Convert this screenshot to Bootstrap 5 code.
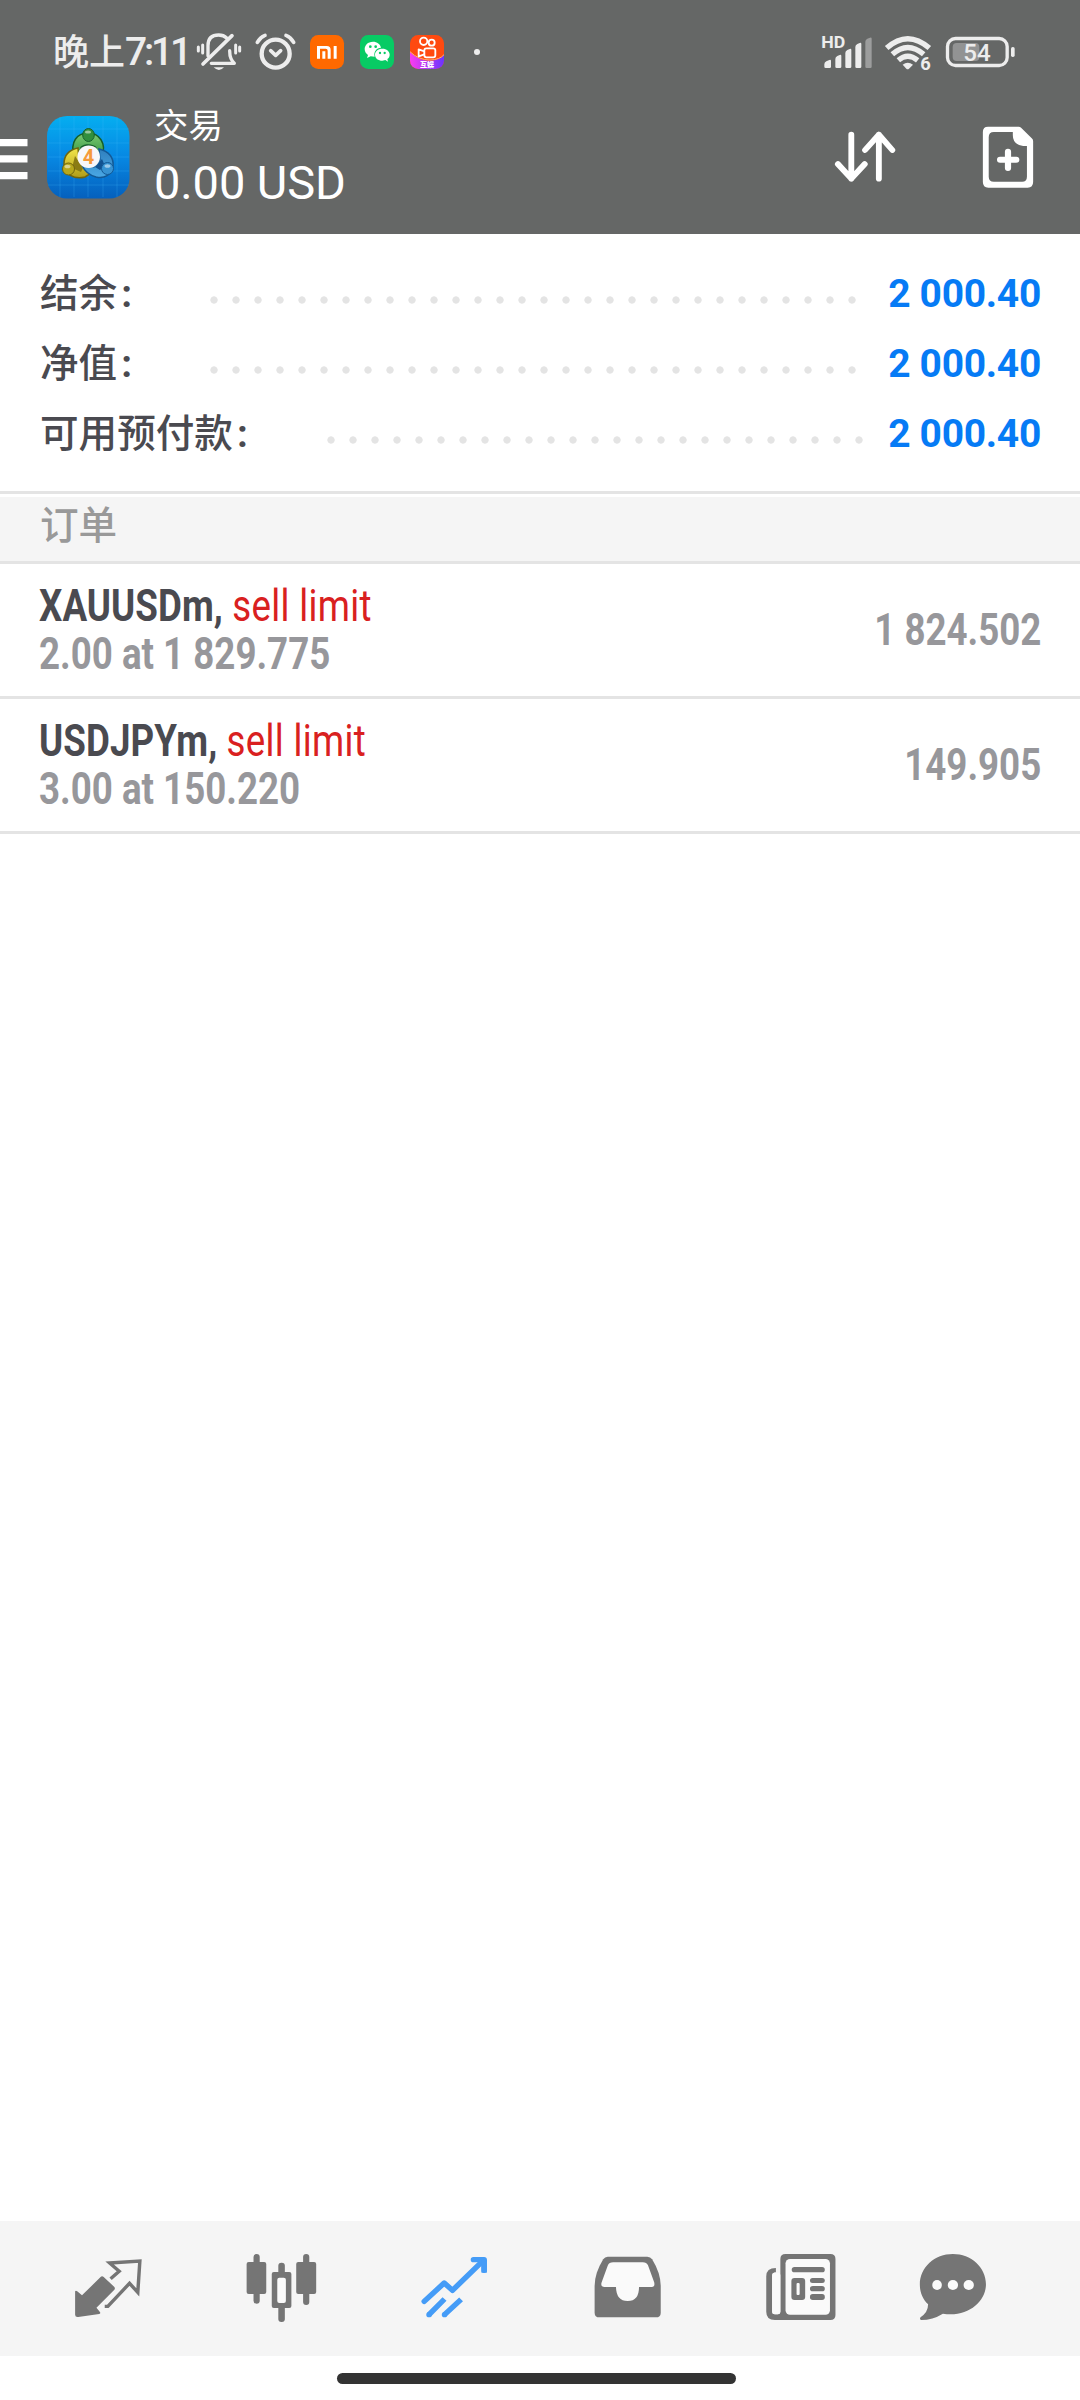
<!DOCTYPE html>
<html lang="zh-CN">
<head>
<meta charset="utf-8">
<meta name="viewport" content="width=device-width, initial-scale=1">
<title>交易</title>
<link href="https://cdn.jsdelivr.net/npm/bootstrap@5.3.0/dist/css/bootstrap.min.css" rel="stylesheet">
<style>
  body { font-family: Roboto, "Noto Sans CJK SC", sans-serif; background: #fff; width: 1080px; height: 2400px; overflow: hidden; }
  svg { display: block; flex: none; }
  .app-head { background: #656766; height: 234px; color: #fff; }
  .status { height: 100px; padding: 1px 52px 0 53px; color: #ededed; }
  .status svg { margin-top: 3px; }
  .clock { font-size: 36px; line-height: 100px; font-weight: 500; width: 143px; white-space: nowrap; font-family: "Noto Sans CJK SC", sans-serif; }
  .clock span { font-family: Roboto, sans-serif; font-size: 39px; letter-spacing: -3.2px; }
  .toolbar { height: 134px; }
  .t-block { padding-left: 24px; }
  .t-small { font-size: 34.5px; line-height: 40px; padding-top: 3px; font-family: "Noto Sans CJK SC", sans-serif; }
  .t-big { font-size: 47px; line-height: 54px; padding-top: 13px; letter-spacing: -.1px; }
  .summary { height: 260px; padding: 23px 39px 0 40px; border-bottom: 3px solid #e4e4e4; }
  .s-row { height: 70px; }
  .s-label { font-size: 38.6px; font-weight: 500; color: #4a4a50; width: 162.5px; font-family: "Noto Sans CJK SC", sans-serif; line-height: 70px; white-space: nowrap; }
  .s-label span { font-family: Roboto, sans-serif; font-weight: 700; margin-left: 4px; }
  .s-label.wide { width: 279.5px; }
  .dots { height: 22px; width: 660px; margin-top: 15px; background: radial-gradient(circle at center, #e4e4e4 3.3px, transparent 4px) 0 0 / 22px 22px; }
  .dots.short { width: 550px; }
  .s-val { font-size: 39px; font-weight: 700; color: #067bf5; letter-spacing: -.3px; line-height: 70px; padding-top: 3px; }
  .sect { margin-top: 3px; height: 67px; background: #f5f5f5; border-bottom: 3px solid #e4e4e4; padding-left: 40px; font-size: 38.6px; line-height: 50px; font-weight: 500; color: #999; font-family: "Noto Sans CJK SC", sans-serif; }
  .order { height: 135px; border-bottom: 3px solid #e4e4e4; padding: 0 39px; font-size: 44px; font-weight: 700; line-height: 48px; }
  .cond { transform: scaleX(.834); transform-origin: 0 50%; white-space: nowrap; }
  .cond.end { transform-origin: 100% 50%; }
  .o-left { padding-top: 18px; }
  .sym { color: #4a4a50; letter-spacing: .1px; }
  .sell { color: #d92020; font-weight: 400; letter-spacing: .4px; }
  .muted { color: #97979b; }
  .tabs { height: 135px; background: #f5f5f5; padding-left: 22px; }
  .tab-i { width: 173px; }
  .tab-i:last-child { width: 132px; }
  .home { height: 44px; padding-right: 7px; }
  .pill { width: 399px; height: 11px; margin-top: 17px; border-radius: 6px; background: #333; }
</style>
</head>
<body class="d-flex flex-column">
<header class="app-head">
  <div class="status d-flex align-items-center">
    <div class="clock">晚上<span>7:11</span></div>
    <svg width="290" height="64" viewBox="0 0 870 192" fill="none" stroke="#ededed">
      <g stroke-width="10" stroke-linecap="round" transform="translate(-48 -1)">
        <path d="M55 82V94M68 76V100M167 76V100M179 82V94" stroke-width="9"/>
        <path d="M84 108V78C84 55 98 46 116 46C126 46 135 50 140 55"/>
        <path d="M156 48L69 133" stroke-width="11"/>
        <path d="M94 131H163C155 122 149 115 149 93" stroke-linejoin="round"/>
        <path d="M101 143H132Q117 159 101 143Z" fill="#ededed" stroke="none"/>
        <circle cx="287" cy="102" r="42" stroke-width="13"/>
        <path d="M272 93L287 107L302 93" stroke-width="11" stroke-linejoin="round"/>
        <path d="M232 68Q240 53 255 47M341 68Q333 53 318 47" stroke-width="11"/>
      </g>
      <g stroke="none" transform="translate(-48 0)">
        <rect x="390" y="45" width="102" height="102" rx="25" fill="#ff6900"/>
        <path d="M411 78H440Q452 78 452 90V116H443V92Q443 86 437 86H420V116H411ZM427 94H436V116H427ZM461 78H470V116H461Z" fill="#fff"/>
        <rect x="540" y="45" width="102" height="102" rx="25" fill="#07cb64"/>
        <path d="M579 65C563 65 554 76 554 87C554 95 558 101 564 105L561 114L572 109L584 110C580 94 590 84 603 83C601 72 591 65 579 65Z" fill="#fff"/>
        <path d="M607 86C594 86 585 94 585 104C585 115 595 122 607 122L616 120L624 125L622 117C627 114 629 109 629 104C629 94 620 86 607 86Z" fill="#fff"/>
        <g fill="#07cb64"><circle cx="571" cy="80" r="4"/><circle cx="587" cy="80" r="4"/><circle cx="600" cy="99" r="3.5"/><circle cx="614" cy="99" r="3.5"/></g>
        <defs>
          <clipPath id="ks"><rect x="690" y="45" width="102" height="102" rx="25"/></clipPath>
          <linearGradient id="kg"><stop offset="0" stop-color="#f93cf0"/><stop offset="1" stop-color="#6a35ff"/></linearGradient>
        </defs>
        <g clip-path="url(#ks)">
          <rect x="690" y="45" width="102" height="102" fill="#ff4a10"/>
          <path d="M690 95Q715 122 750 122Q780 121 792 104V147H690Z" fill="url(#kg)"/>
          <path d="M690 95Q715 120 750 120Q780 119 792 104" fill="none" stroke="#ffb070" stroke-width="3"/>
        </g>
        <g fill="none" stroke="#fff" stroke-width="5.5"><circle cx="731" cy="64" r="11"/><circle cx="755" cy="68" r="9"/><rect x="733" y="85" width="33" height="27" rx="6"/><path d="M733 94L716 88V109L733 103" stroke-linejoin="round"/></g>
        <text x="741" y="142" font-size="21" font-weight="900" fill="#fff" text-anchor="middle" font-family="Noto Sans CJK SC, sans-serif">互娱</text>
        <circle cx="891" cy="96" r="9" fill="#ededed"/>
      </g>
    </svg>
    <svg class="ms-auto" width="208" height="64" viewBox="0 0 624 192">
      <g fill="#ededed" transform="translate(-30 0)">
        <text x="34" y="83" font-size="48" font-weight="700" font-family="Roboto, sans-serif" textLength="72" lengthAdjust="spacingAndGlyphs">HD</text>
        <path d="M43 144V133Q43 127 49 124L58 120Q63 118 63 123V140Q63 144 59 144H47Q43 144 43 140ZM76 144V117Q76 111 82 108L89 105Q94 103 94 108V140Q94 144 90 144H80Q76 144 76 140ZM106 144V99Q106 93 112 90L119 87Q124 85 124 90V140Q124 144 120 144H110Q106 144 106 140ZM136 144V81Q136 75 142 72L149 69Q154 67 154 72V140Q154 144 150 144H140Q136 144 136 140Z"/>
        <path d="M166 144V65Q166 59 172 56L180 53Q185 51 185 56V140Q185 144 181 144H170Q166 144 166 140Z" fill="#9c9d9d"/>
        <g fill="none" stroke="#ededed" stroke-width="16">
          <path d="M230 84Q293 28 358 84"/><path d="M247 103Q293 62 341 103"/><path d="M265 121Q293 97 323 121"/>
        </g>
        <path d="M278 134Q293 122 309 134L297 146Q293 149 289 146Z"/>
        <text x="331" y="151" font-size="55" font-weight="700" font-family="Roboto, sans-serif" stroke="#656766" stroke-width="8" paint-order="stroke">6</text>
        <rect x="412.5" y="55.5" width="179" height="81" rx="24" fill="none" stroke="#ededed" stroke-width="10"/>
        <rect x="428" y="69" width="80" height="54" rx="12" fill="#929393"/>
        <rect x="603" y="81" width="11" height="30" rx="5"/>
        <text x="501" y="123" font-size="74" font-weight="500" text-anchor="middle" font-family="Roboto, sans-serif" textLength="82" lengthAdjust="spacingAndGlyphs">54</text>
      </g>
    </svg>
  </div>
  <div class="toolbar d-flex">
    <svg width="47" height="134" viewBox="0 0 47 134" fill="#fff"><path d="M0 39h27.5v7.3H0zM0 55.3h27.5v7.3H0zM0 72h27.5v7.3H0z"/></svg>
    <svg width="83" height="134" viewBox="0 0 83 134">
      <defs>
        <linearGradient id="bg" x1=".5" y1="0" x2=".5" y2="1"><stop offset="0" stop-color="#05aef0"/><stop offset=".5" stop-color="#0788e3"/><stop offset="1" stop-color="#0560bd"/></linearGradient>
        <linearGradient id="gr" x2="0" y2="1"><stop offset="0" stop-color="#7ccb72"/><stop offset="1" stop-color="#1c8434"/></linearGradient>
        <linearGradient id="ye" x2="0" y2="1"><stop offset="0" stop-color="#f2e64a"/><stop offset="1" stop-color="#b09c18"/></linearGradient>
        <linearGradient id="bl" x2="0" y2="1"><stop offset="0" stop-color="#2f7fbe"/><stop offset="1" stop-color="#4aa8e4"/></linearGradient>
      </defs>
      <rect x="0" y="16" width="82.5" height="82.5" rx="20" fill="url(#bg)"/>
      <path d="M13 17V97M27 17V97M41 17V97M56 17V97M70 17V97M1 29H82M1 43H82M1 57H82M1 71H82M1 85H82" stroke="#4bc3ff" stroke-opacity=".22"/>
      <path d="M27 56C23 42 30 33 41 33S60 43 55 57L50 61L41 64L31 61Z" fill="url(#gr)" stroke="#155f2a" stroke-width="1.5"/>
      <path d="M33 48C35 43 47 43 50 48L46 51H37Z" fill="#155f2a"/>
      <path d="M31 48C21 50 17 56 17 64C17 74 27 80 38 77L46 72L32 60Z" fill="url(#ye)" stroke="#71650c" stroke-width="1.5"/>
      <path d="M25 68L28 56L36 68L34 72Z" fill="#8b7c13"/>
      <path d="M52 49C62 51 67 58 66 66C65 75 57 79 49 77C42 75 37 70 35 65L47 67L53 60Z" fill="url(#bl)" stroke="#135995" stroke-width="1.5"/>
      <path d="M48 67L55 59L58 66L53 70Z" fill="#125291"/>
      <g stroke-width="1"><ellipse cx="41.5" cy="35" rx="5.8" ry="6.5" fill="#318f3d" stroke="#155f2a"/><circle cx="21.5" cy="69" r="6" fill="#b7a81c" stroke="#71650c"/><circle cx="60.5" cy="68.5" r="6" fill="#3793d3" stroke="#135995"/></g>
      <g fill="#fff" opacity=".5"><ellipse cx="41" cy="32" rx="3" ry="1.6"/><ellipse cx="20.5" cy="66.5" rx="3" ry="1.8"/><ellipse cx="60.5" cy="66" rx="3" ry="1.8"/></g>
      <circle cx="41.7" cy="56.8" r="11.3" fill="#f7f7fa"/>
      <text x="41.5" y="64" font-size="20" font-weight="700" text-anchor="middle" fill="#f59a3a" font-family="Roboto, sans-serif">4</text>
    </svg>
    <div class="t-block">
      <div class="t-small">交易</div>
      <div class="t-big">0.00 USD</div>
    </div>
    <svg class="ms-auto" width="260" height="134" viewBox="0 0 260 134">
      <g transform="translate(-280 -100) scale(.34437 .33333)" fill="none" stroke="#fff" stroke-linecap="round" stroke-linejoin="round">
        <path d="M904 404V536M865 492L904 536L943 492M984 536V404M944 450L984 404L1023 450" stroke-width="17"/>
        <path d="M1301 380H1390Q1394 380 1397 383L1428 415Q1432 418 1432 424V546Q1432 563 1416 563H1302Q1286 563 1286 546V396Q1286 380 1301 380ZM1318 396Q1303 396 1303 412V530Q1303 545 1318 545H1400Q1414 545 1414 530V438H1403Q1373 434 1373 406V396Z" fill="#fff" fill-rule="evenodd" stroke="none"/>
        <path d="M1359 455V504M1336 479H1383" stroke-width="18"/>
      </g>
    </svg>
  </div>
</header>

<section class="summary">
  <div class="s-row d-flex align-items-center"><div class="s-label">结余<span>:</span></div><div class="dots"></div><div class="s-val ms-auto">2 000.40</div></div>
  <div class="s-row d-flex align-items-center"><div class="s-label">净值<span>:</span></div><div class="dots"></div><div class="s-val ms-auto">2 000.40</div></div>
  <div class="s-row d-flex align-items-center"><div class="s-label wide">可用预付款<span>:</span></div><div class="dots short"></div><div class="s-val ms-auto">2 000.40</div></div>
</section>
<div class="sect">订单</div>
<main class="flex-grow-1">
  <div class="order d-flex justify-content-between align-items-center">
    <div class="cond o-left align-self-start"><div class="sym">XAUUSDm, <span class="sell">sell limit</span></div><div class="muted">2.00 at 1 829.775</div></div>
    <div class="cond end muted">1 824.502</div>
  </div>
  <div class="order d-flex justify-content-between align-items-center">
    <div class="cond o-left align-self-start"><div class="sym">USDJPYm, <span class="sell">sell limit</span></div><div class="muted">3.00 at 150.220</div></div>
    <div class="cond end muted">149.905</div>
  </div>
</main>

<nav class="tabs d-flex">
  <div class="tab-i d-flex justify-content-center"><svg width="100" height="135" viewBox="0 0 100 135"><g transform="translate(-59.3 -21) scale(.34437 .33333)" fill="#757575">
    <path d="M219 274Q221 270 225 274L239 286L293 231Q297 226 302 231L333 261Q336 265 333 269L281 323L291 336Q294 341 289 342L228 351Q219 352 219 344Z"/>
    <path d="M322 236L347 214L319 189L407 183L401 277L377 250L314 319H305" fill="none" stroke="#757575" stroke-width="10"/></g></svg></div>
  <div class="tab-i d-flex justify-content-center"><svg width="100" height="135" viewBox="0 0 100 135"><g transform="translate(-231.6 -21) scale(.34437 .33333)" fill="#757575">
    <rect x="735" y="162" width="18" height="149" rx="9"/><rect x="715" y="186" width="57" height="96" rx="6"/><rect x="879" y="162" width="18" height="153" rx="9"/><rect x="859" y="186" width="58" height="96" rx="6"/><rect x="807" y="188" width="19" height="178" rx="9"/><rect x="788" y="216" width="57" height="108" rx="6"/><rect x="804" y="233" width="25" height="76" rx="6" fill="#fafafa"/></g></svg></div>
  <div class="tab-i d-flex justify-content-center"><svg width="100" height="135" viewBox="0 0 100 135"><g transform="translate(-404.7 -21) scale(.34437 .33333)" fill="none" stroke="#459cf7" stroke-width="16" stroke-linejoin="round">
    <path d="M1231 304L1289 249L1313 271L1402 182" stroke-linecap="round"/><path d="M1374 179H1405V211" stroke-linecap="round"/><path d="M1405 179V218"/><path d="M1245 344L1290 297M1290 344L1338 298"/><g fill="#459cf7" stroke="none"><circle cx="1245" cy="344" r="8"/><circle cx="1290" cy="344" r="8"/></g></g></svg></div>
  <div class="tab-i d-flex justify-content-center"><svg width="100" height="135" viewBox="0 0 100 135"><g transform="translate(-37.8 -21) scale(.34437 .33333)">
    <path d="M196 170H311Q320 170 325 178Q350 220 350 258V338Q350 352 336 352H172Q158 352 158 338V258Q158 220 183 178Q188 170 196 170Z" fill="#757575"/>
    <path d="M212 187H298Q309 187 313 196L331 247Q334 261 324 261H287Q287 303 254 303T220 261H187Q175 261 178 248L196 197Q200 187 212 187Z" fill="#fafafa"/></g></svg></div>
  <div class="tab-i d-flex justify-content-center"><svg width="100" height="135" viewBox="0 0 100 135"><g transform="translate(-211 -21) scale(.34437 .33333)" fill="#757575">
    <path d="M685 204V217Q674 217 674 229V334Q674 343 683 343H690Q698 343 698 334V177Q698 162 713 162H843Q858 162 858 177V345Q858 360 843 360H682Q657 360 657 335V229Q657 204 685 204Z"/>
    <rect x="713" y="177" width="129" height="167" rx="13" fill="#fafafa"/><rect x="674" y="218" width="24" height="125" rx="7" fill="#fafafa"/>
    <rect x="731" y="201" width="96" height="16" rx="8"/><rect x="730" y="234" width="40" height="66" rx="9"/><rect x="745" y="249" width="9" height="36" rx="3" fill="#fafafa"/><rect x="784" y="234" width="43" height="15" rx="7.5"/><rect x="784" y="258" width="43" height="16" rx="8"/><rect x="784" y="282" width="43" height="18" rx="8"/></g></svg></div>
  <div class="tab-i d-flex justify-content-center"><svg width="100" height="135" viewBox="0 0 100 135"><g transform="translate(-363 -21) scale(.34437 .33333)">
    <path d="M1199 162C1252 162 1295 202 1295 253C1295 306 1241 353 1170 341Q1140 360 1107 360Q1101 358 1105 352Q1127 337 1127 313C1111 297 1103 277 1103 253C1103 202 1146 162 1199 162Z" fill="#757575"/>
    <g fill="#fafafa"><ellipse cx="1153" cy="255" rx="14" ry="15"/><ellipse cx="1199" cy="255" rx="15" ry="15"/><ellipse cx="1245" cy="255" rx="15" ry="15"/></g></g></svg></div>
</nav>
<div class="home d-flex justify-content-center"><div class="pill"></div></div>
<script src="https://cdn.jsdelivr.net/npm/bootstrap@5.3.0/dist/js/bootstrap.bundle.min.js"></script>
</body>
</html>
